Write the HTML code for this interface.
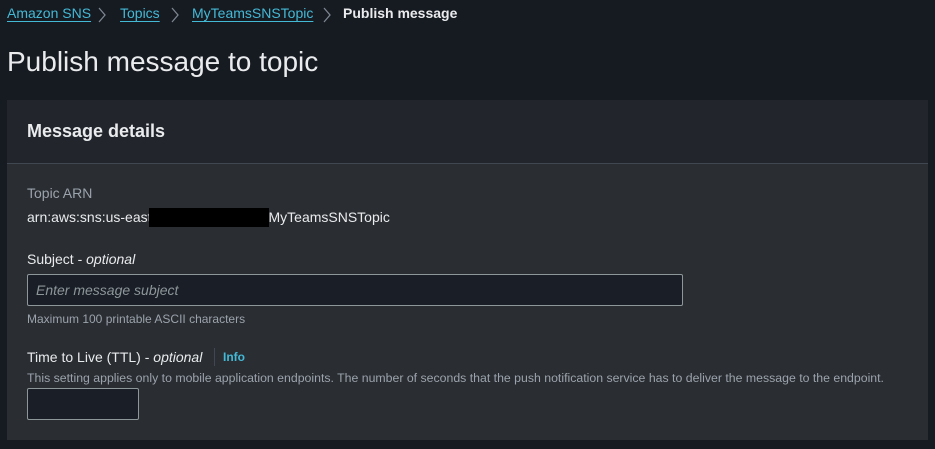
<!DOCTYPE html>
<html><head><meta charset="utf-8"><style>
*{margin:0;padding:0;box-sizing:border-box}
body{width:935px;height:449px;background:#161a21;font-family:"Liberation Sans",sans-serif;position:relative;overflow:hidden;color:#d1d5db}
.a{position:absolute;white-space:nowrap}
.bc{top:5px;font-size:14px}
.lnk{color:#44b9d6;text-decoration:underline;text-underline-offset:3px}
h1{position:absolute;left:7px;top:46px;font-size:28px;font-weight:normal;color:#e9ebed}
.panel{position:absolute;left:7px;top:100px;width:921px;height:340px;background:#2a2d32}
.ph{position:absolute;left:0;top:0;width:100%;height:64px;background:#22262c;border-bottom:1px solid #414750}
svg.ch{position:absolute;top:7px}
</style></head><body>
<div class="a bc" style="left:7px"><span class="lnk">Amazon SNS</span></div>
<svg class="ch" style="left:97px" width="10" height="16" viewBox="0 0 10 16"><path d="M2 1l6 7-6 7" fill="none" stroke="#7d8590" stroke-width="1.3"/></svg>
<div class="a bc" style="left:120px"><span class="lnk">Topics</span></div>
<svg class="ch" style="left:170px" width="10" height="16" viewBox="0 0 10 16"><path d="M2 1l6 7-6 7" fill="none" stroke="#7d8590" stroke-width="1.3"/></svg>
<div class="a bc" style="left:192px"><span class="lnk">MyTeamsSNSTopic</span></div>
<svg class="ch" style="left:322px" width="10" height="16" viewBox="0 0 10 16"><path d="M2 1l6 7-6 7" fill="none" stroke="#7d8590" stroke-width="1.3"/></svg>
<div class="a bc" style="left:343px;font-weight:bold;color:#e9ebed">Publish message</div>
<h1>Publish message to topic</h1>
<div class="panel"><div class="ph"></div></div>
<div class="a" style="left:27px;top:121px;font-size:18px;font-weight:bold;color:#e9ebed">Message details</div>
<div class="a" style="left:27px;top:185px;font-size:14px;color:#9ba3ac">Topic ARN</div>
<div class="a" style="left:27px;top:208px;font-size:14px;color:#e9ebed">arn:aws:sns:us-east<span style="display:inline-block;width:120px;height:19px;background:#000;vertical-align:-5px;margin-left:-3px"></span>MyTeamsSNSTopic</div>
<div class="a" style="left:27px;top:251px;font-size:14px;color:#e9ebed">Subject - <i>optional</i></div>
<div class="a" style="left:27px;top:274px;width:656px;height:32px;background:#1a1f27;border:1px solid #8d9699;border-radius:2px"></div>
<div class="a" style="left:36px;top:282px;font-size:14px;font-style:italic;color:#8d9699">Enter message subject</div>
<div class="a" style="left:27px;top:312px;font-size:12px;color:#9ba3ac">Maximum 100 printable ASCII characters</div>
<div class="a" style="left:27px;top:349px;font-size:14px;color:#e9ebed">Time to Live (TTL) - <i>optional</i></div>
<div class="a" style="left:214px;top:348px;width:1px;height:18px;background:#414750"></div>
<div class="a" style="left:223px;top:350px;font-size:12px;font-weight:bold;color:#44b9d6">Info</div>
<div class="a" style="left:27px;top:371px;font-size:12.3px;color:#9ba3ac">This setting applies only to mobile application endpoints. The number of seconds that the push notification service has to deliver the message to the endpoint.</div>
<div class="a" style="left:27px;top:388px;width:112px;height:32px;background:#1a1f27;border:1px solid #8d9699;border-radius:2px"></div>
</body></html>
